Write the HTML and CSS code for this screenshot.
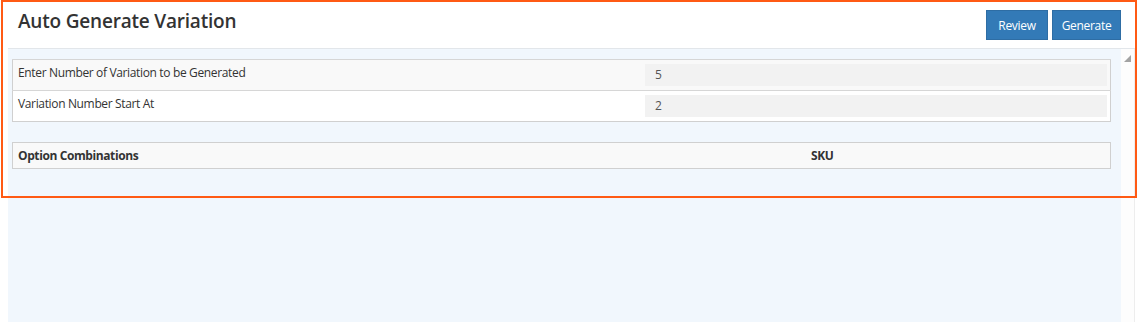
FILE: index.html
```html
<!DOCTYPE html>
<html>
<head>
<meta charset="utf-8">
<link rel="stylesheet" href="styles.css">
</head>
<body>
<div class="page">
  <div class="header">
    <h1 class="title">Auto Generate Variation</h1>
    <div class="actions">
      <button class="btn btn-review">Review</button>
      <button class="btn btn-generate">Generate</button>
    </div>
  </div>
  <div class="main">
    <div class="panel">
      <table class="form-table">
        <tr class="row-odd">
          <td class="label-cell">Enter Number of Variation to be Generated</td>
          <td class="input-cell"><div class="input">5</div></td>
        </tr>
        <tr class="row-even">
          <td class="label-cell">Variation Number Start At</td>
          <td class="input-cell"><div class="input">2</div></td>
        </tr>
      </table>
      <table class="combo-table">
        <tr>
          <th class="col-option">Option Combinations</th>
          <th class="col-sku">SKU</th>
        </tr>
      </table>
    </div>
    <div class="scrollbar">
      <svg class="arrow" width="8" height="8" viewBox="0 0 8 8"><polygon points="7,0 7,7 0,7" fill="#a3a3a3"/></svg>
    </div>
  </div>
  <div class="highlight"></div>
</div>
</body>
</html>
```

FILE: styles.css
```css
html, body {
  margin: 0;
  padding: 0;
  background: #ffffff;
}
.page {
  position: relative;
  width: 1138px;
  height: 322px;
  overflow: hidden;
  display: flex;
  flex-direction: column;
  font-family: "Open Sans", "Liberation Sans", sans-serif;
  color: #333333;
}
.header {
  height: 48px;
  flex: none;
  display: flex;
  justify-content: space-between;
  align-items: flex-start;
  border-bottom: 1px solid #e2e6ea;
  margin-left: 8px;
  margin-right: 2px;
  box-sizing: content-box;
}
.title {
  margin: 0;
  padding: 8px 0 0 10px;
  font-size: 19px;
  font-weight: 600;
  color: #333333;
  line-height: 26px;
  letter-spacing: -0.2px;
}
.actions {
  display: flex;
  gap: 4px;
  padding-top: 10px;
  padding-right: 15px;
}
.btn {
  height: 30px;
  background: #337ab7;
  border: 1px solid #2e6da4;
  color: #ffffff;
  font-family: "Open Sans", "Liberation Sans", sans-serif;
  font-size: 12px;
  padding: 0;
  border-radius: 0;
  letter-spacing: -0.3px;
}
.btn-review { width: 62px; }
.btn-generate { width: 69px; }
.main {
  flex: 1;
  display: flex;
}
.panel {
  margin-left: 8px;
  width: 1113px;
  background: #f1f7fd;
  padding: 10px 0 0 4px;
  box-sizing: border-box;
}
.scrollbar {
  width: 14px;
  background: #fdfdfd;
  border-right: 1px solid #ededed;
  display: flex;
  justify-content: center;
  padding-top: 6px;
  box-sizing: border-box;
}
.arrow { display: block; }
table {
  border-collapse: collapse;
  width: 1099px;
  font-size: 12px;
}
.form-table {
  border: 1px solid #d0d0d0;
}
.form-table td {
  border-top: 1px solid #d6d6d6;
}
.row-odd { background: #f9f9f9; }
.row-even { background: #ffffff; }
.label-cell {
  height: 26px;
  padding: 4px 0 0 5px;
  vertical-align: top;
  line-height: 17px;
  width: 627px;
  letter-spacing: -0.35px;
}
.input-cell {
  height: 30px;
  padding: 0 3px 0 0;
  vertical-align: middle;
}
.input {
  height: 22px;
  line-height: 22px;
  background: #f2f2f2;
  padding-left: 10px;
  color: #555555;
  font-size: 12px;
}
.combo-table {
  margin-top: 20px;
  border: 1px solid #d0d0d0;
  background: #f9f9f9;
}
.combo-table th {
  height: 25px;
  padding: 0 0 0 5px;
  text-align: left;
  font-weight: 700;
  font-size: 12px;
  letter-spacing: -0.4px;
}
.col-option { width: 788px; }
.highlight {
  position: absolute;
  left: 1px;
  top: 0;
  width: 1136px;
  height: 198px;
  border: 2px solid #ff5a14;
  box-sizing: border-box;
  pointer-events: none;
}
```
